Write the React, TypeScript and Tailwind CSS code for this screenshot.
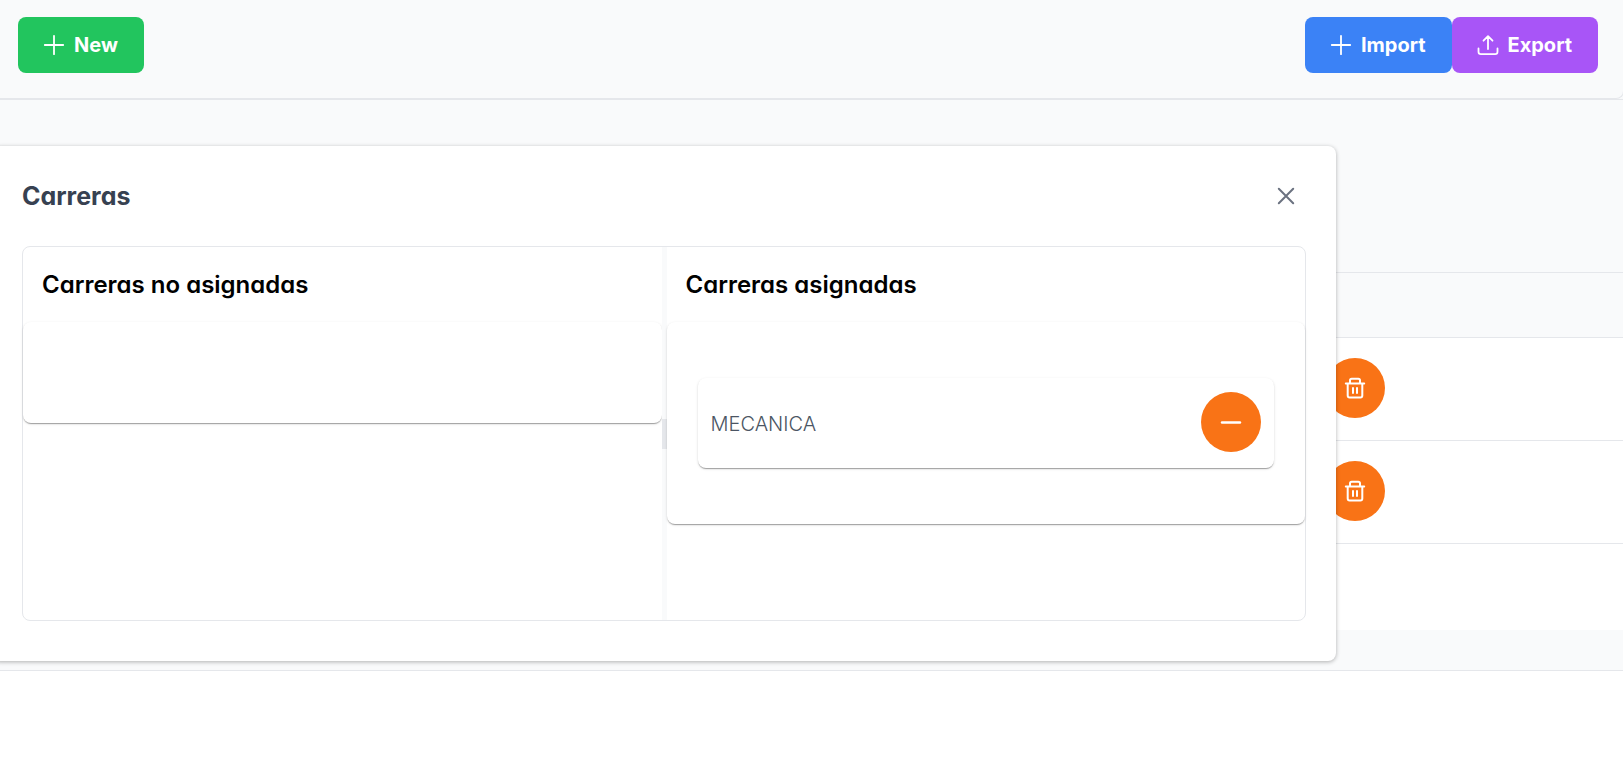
import React from "react";

type IconProps = { className?: string; children: React.ReactNode };

function Icon({ className = "size-5", children }: IconProps) {
  return (
    <svg
      viewBox="0 0 20 20"
      className={`shrink-0 overflow-visible ${className}`}
      fill="none"
      stroke="currentColor"
      strokeWidth="1.8"
      strokeLinecap="round"
      strokeLinejoin="round"
      aria-hidden="true"
    >
      {children}
    </svg>
  );
}

const PlusIcon = () => (
  <Icon>
    <path d="M10 .8v18.400M.8 10h18.400" />
  </Icon>
);

const UploadIcon = () => (
  <Icon>
    <path d="M10 14V1.500M5.500 5.700L10 1.200l4.500 4.500M.5 13.500v3.300a2.400 2.400 0 0 0 2.400 2.400h14.200a2.400 2.400 0 0 0 2.400-2.400v-3.300" />
  </Icon>
);

const TrashIcon = () => (
  <Icon>
    <path
      d="M.8 5.500h18.400M2.700 5.500v12a1.900 1.900 0 0 0 1.900 1.900h10.800a1.900 1.900 0 0 0 1.900-1.900v-12M5 5.500v-3a1.700 1.700 0 0 1 1.700-1.700h6.600A1.700 1.700 0 0 1 15 2.500v3M8 10v5M12 10v5"
      strokeWidth="2"
    />
  </Icon>
);

const MinusIcon = () => (
  <Icon>
    <path d="M1 10.500h18" strokeWidth="2.400" />
  </Icon>
);

const CloseIcon = () => (
  <Icon>
    <path d="M2.800 2.800l14.400 14.400M17.200 2.800L2.800 17.200" strokeWidth="2" />
  </Icon>
);

function ToolButton({
  color,
  icon,
  label,
}: {
  color: string;
  icon: React.ReactNode;
  label: string;
}) {
  return (
    <button
      type="button"
      className={`flex h-14 items-center gap-2.5 rounded-lg px-[26px] text-xl font-bold text-white ${color}`}
    >
      {icon}
      <span>{label}</span>
    </button>
  );
}

function RoundButton({ label, children }: { label: string; children: React.ReactNode }) {
  return (
    <button
      type="button"
      aria-label={label}
      className="flex size-15 shrink-0 items-center justify-center rounded-full bg-[#f97316] text-white"
    >
      {children}
    </button>
  );
}

const cardShadow =
  "rounded-lg bg-white shadow-[0_2px_1px_-1px_rgba(0,0,0,0.2),0_1px_1px_0_rgba(0,0,0,0.14),0_1px_3px_0_rgba(0,0,0,0.12)]";

function CareersDialog() {
  return (
    <section
      role="dialog"
      aria-labelledby="careers-title"
      className="absolute top-[146px] right-[287px] -left-2 rounded-lg bg-white px-[30px] pb-10 shadow-[0_1px_4px_rgba(0,0,0,0.3)]"
    >
      <header className="flex h-25 items-center justify-between">
        <h2 id="careers-title" className="pt-0.5 text-[25px] font-bold text-[#374151]">
          Carreras
        </h2>
        <button
          type="button"
          aria-label="Close"
          className="flex size-10 items-center justify-center rounded-full text-[#6b7280]"
        >
          <CloseIcon />
        </button>
      </header>
      <div className="flex h-[375px] rounded-lg border border-[#e5e7eb]">
        <div className="flex-1">
          <h3 className="flex h-[75px] items-center px-[19px] text-2xl font-semibold text-black">
            Carreras no asignadas
          </h3>
          <div className={`h-[101px] ${cardShadow}`} />
        </div>
        <div className="flex w-[5px] items-center bg-[#f9fafb]">
          <div className="h-[30px] w-full bg-[#e5e7eb]" />
        </div>
        <div className="flex-1">
          <h3 className="flex h-[75px] items-center px-[19px] text-2xl font-semibold text-black">
            Carreras asignadas
          </h3>
          <div className={`px-[31px] py-14 ${cardShadow}`}>
            <div
              className={`flex h-[90px] items-center justify-between px-[13px] pb-0.5 ${cardShadow}`}
            >
              <span className="pt-1 text-xl font-light text-[#4b5563]">MECANICA</span>
              <RoundButton label="Quitar MECANICA">
                <MinusIcon />
              </RoundButton>
            </div>
          </div>
        </div>
      </div>
    </section>
  );
}

export default function App() {
  return (
    <div className="relative min-h-screen overflow-hidden bg-white font-['Inter',sans-serif] [font-feature-settings:'cv02','cv03','cv04','cv11']">
      <div className="border-b border-[#e5e7eb] bg-[#f9fafb]">
        <div className="-mr-px flex h-[99px] items-start justify-between rounded-br-lg border-r border-b border-[#e5e7eb] pt-[17px] pr-[25px] pl-[18px]">
          <ToolButton color="bg-[#22c55e]" icon={<PlusIcon />} label="New" />
          <div className="flex">
            <ToolButton color="bg-[#3b82f6]" icon={<PlusIcon />} label="Import" />
            <ToolButton color="bg-[#a855f7]" icon={<UploadIcon />} label="Export" />
          </div>
        </div>
        <div className="h-[174px] border-y border-[#e5e7eb]" />
        <div className="h-16" />
        <ul className="bg-white">
          {["first", "second"].map((row) => (
            <li key={row} className="border-t border-[#e5e7eb] pt-5 pr-[238px] pb-[22px]">
              <div className="flex justify-end">
                <RoundButton label={`Delete ${row} row`}>
                  <TrashIcon />
                </RoundButton>
              </div>
            </li>
          ))}
          <li className="h-[87px] border-t border-[#e5e7eb]" />
        </ul>
        <div className="h-10" />
      </div>
      <CareersDialog />
    </div>
  );
}
